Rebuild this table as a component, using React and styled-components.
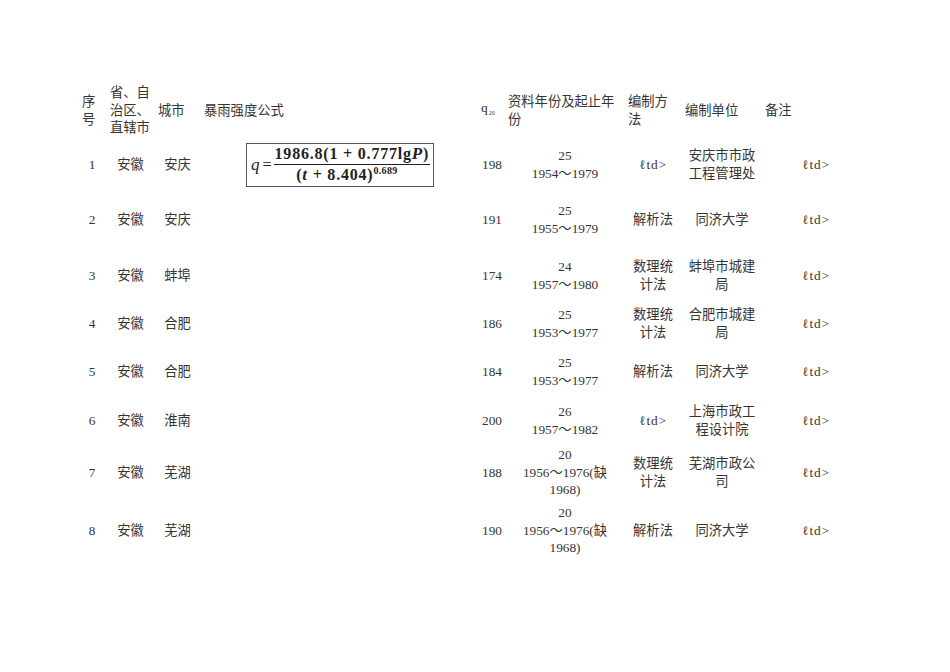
import React from "react";
import styled, { createGlobalStyle } from "styled-components";

const Global = createGlobalStyle`
  html, body { margin: 0; padding: 0; background: #fff; }
  body {
    font-family: "Liberation Serif", "Noto Sans CJK SC", serif;
    color: #353535;
    font-size: 13.3px;
    line-height: 17.5px;
  }
`;

const Page = styled.div`
  width: 950px;
  height: 672px;
  padding: 80px 0 0 82px;
  box-sizing: border-box;
`;

const Table = styled.table`
  border-collapse: collapse;
  border-spacing: 0;
  table-layout: fixed;
`;

const Row = styled.tr`
  height: ${(p) => p.$h}px;
`;

const HeadCell = styled.th`
  width: ${(p) => p.$w}px;
  padding: 1px ${(p) => p.$pr}px 0 0;
  font-weight: normal;
  text-align: left;
  vertical-align: middle;
  box-sizing: content-box;
`;

const Cell = styled.td`
  padding: 1px ${(p) => p.$pr}px 0 0;
  text-align: center;
  vertical-align: middle;
  box-sizing: content-box;
`;

const Sub = styled.span`
  font-size: 6px;
  vertical-align: -3px;
  margin-left: 1px;
`;

const Broken = styled.span`
  font-size: 13.3px;
  letter-spacing: 0.8px;
  &::first-letter { font-style: italic; }
`;

const FormulaBox = styled.div`
  display: inline-flex;
  align-items: center;
  width: 188px;
  height: 44px;
  border: 1px solid #555;
  box-sizing: border-box;
  padding-left: 4px;
  color: #222;
  font-family: "Liberation Serif", serif;
`;

const Var = styled.span`
  font-style: italic;
  font-size: 17px;
  font-weight: ${(p) => (p.$bold ? "bold" : "normal")};
`;

const Eq = styled.span`
  font-size: 16px;
  margin: 0 2px 0 3px;
`;

const Fraction = styled.span`
  display: inline-flex;
  flex-direction: column;
  align-items: center;
  font-weight: bold;
  font-size: 16px;
  line-height: 18px;
`;

const Numerator = styled.span`
  padding: 0 1px 1px;
  border-bottom: 1.5px solid #222;
  letter-spacing: 0.8px;
  white-space: nowrap;
`;

const Denominator = styled.span`
  padding-top: 1px;
  letter-spacing: 0.8px;
  white-space: nowrap;
  margin-right: 10px;
`;

const Sup = styled.sup`
  font-size: 10px;
  vertical-align: 6px;
  line-height: 0;
  letter-spacing: 0.3px;
`;

const TD = () => <Broken>ℓtd&gt;</Broken>;

const Formula = () => (
  <FormulaBox>
    <Var>q</Var>
    <Eq>=</Eq>
    <Fraction>
      <Numerator>
        1986.8(1 + 0.777lg<Var $bold>P</Var>)
      </Numerator>
      <Denominator>
        (<Var $bold>t</Var> + 8.404)<Sup>0.689</Sup>
      </Denominator>
    </Fraction>
  </FormulaBox>
);

const cols = [
  { w: 20, pr: 8 },
  { w: 41, pr: 7 },
  { w: 39, pr: 7 },
  { w: 272, pr: 5 },
  { w: 22, pr: 5 },
  { w: 114, pr: 6 },
  { w: 50, pr: 7 },
  { w: 74, pr: 6 },
  { w: 102, pr: 0 },
];

const headers = [
  "序号",
  "省、自治区、直辖市",
  "城市",
  "暴雨强度公式",
  <>
    q<Sub>20</Sub>
  </>,
  "资料年份及起止年份",
  "编制方法",
  "编制单位",
  "备注",
];

const rows = [
  { h: 48, n: 1, p: "安徽", c: "安庆", f: true, q: 198, y: "25", r: "1954～1979", m: null, u: "安庆市市政工程管理处" },
  { h: 62, n: 2, p: "安徽", c: "安庆", q: 191, y: "25", r: "1955～1979", m: "解析法", u: "同济大学" },
  { h: 50, n: 3, p: "安徽", c: "蚌埠", q: 174, y: "24", r: "1957～1980", m: "数理统计法", u: "蚌埠市城建局" },
  { h: 46, n: 4, p: "安徽", c: "合肥", q: 186, y: "25", r: "1953～1977", m: "数理统计法", u: "合肥市城建局" },
  { h: 50, n: 5, p: "安徽", c: "合肥", q: 184, y: "25", r: "1953～1977", m: "解析法", u: "同济大学" },
  { h: 48, n: 6, p: "安徽", c: "淮南", q: 200, y: "26", r: "1957～1982", m: null, u: "上海市政工程设计院" },
  { h: 56, n: 7, p: "安徽", c: "芜湖", q: 188, y: "20", r: "1956～1976(缺1968)", m: "数理统计法", u: "芜湖市政公司" },
  { h: 60, n: 8, p: "安徽", c: "芜湖", q: 190, y: "20", r: "1956～1976(缺1968)", m: "解析法", u: "同济大学" },
];

export default function App() {
  return (
    <>
      <Global />
      <Page>
        <Table>
          <thead>
            <Row $h={60}>
              {headers.map((h, i) => (
                <HeadCell key={i} $w={cols[i].w} $pr={cols[i].pr}>
                  {h}
                </HeadCell>
              ))}
            </Row>
          </thead>
          <tbody>
            {rows.map((r) => (
              <Row key={r.n} $h={r.h}>
                <Cell $pr={cols[0].pr}>{r.n}</Cell>
                <Cell $pr={cols[1].pr}>{r.p}</Cell>
                <Cell $pr={cols[2].pr}>{r.c}</Cell>
                <Cell $pr={cols[3].pr}>{r.f ? <Formula /> : null}</Cell>
                <Cell $pr={cols[4].pr}>{r.q}</Cell>
                <Cell $pr={cols[5].pr}>
                  {r.y}
                  <br />
                  {r.r}
                </Cell>
                <Cell $pr={cols[6].pr}>{r.m ? r.m : <TD />}</Cell>
                <Cell $pr={cols[7].pr}>{r.u}</Cell>
                <Cell $pr={cols[8].pr}>
                  <TD />
                </Cell>
              </Row>
            ))}
          </tbody>
        </Table>
      </Page>
    </>
  );
}
